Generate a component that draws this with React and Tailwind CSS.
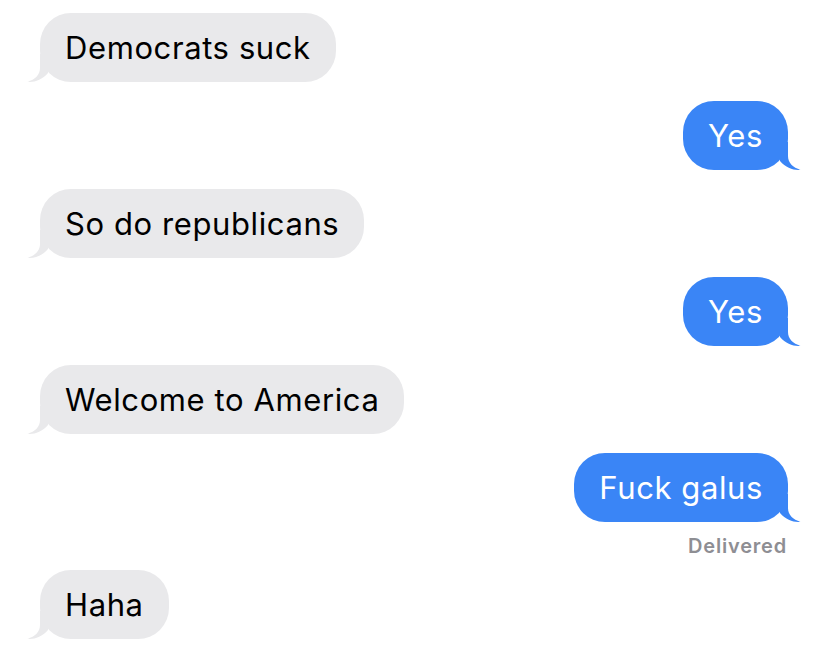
const font = { fontFamily: "Inter, 'Noto Sans', sans-serif" };

const TailLeft = () => (
  <svg
    className="absolute -left-[13px] bottom-0"
    width="24"
    height="28"
    viewBox="0 0 24 28"
  >
    <path
      d="M13 0 L13 14 C13 21 8 25.5 0.5 27.8 C7 28.6 15 26 21 19 L21 0 Z"
      fill="#e9e9eb"
    />
  </svg>
);

const TailRight = () => (
  <svg
    className="absolute -right-[13px] bottom-0 -scale-x-100"
    width="24"
    height="28"
    viewBox="0 0 24 28"
  >
    <path
      d="M13 0 L13 14 C13 21 8 25.5 0.5 27.8 C7 28.6 15 26 21 19 L21 0 Z"
      fill="#3a85f6"
    />
  </svg>
);

const Received = ({ text, className = "" }) => (
  <div className={`flex justify-start ${className}`}>
    <div className="relative h-[69px] flex items-center px-[25px] pt-[2px] rounded-[31px] bg-[#e9e9eb] text-black text-[31px] tracking-[0.6px]">
      <TailLeft />
      <span className="relative">{text}</span>
    </div>
  </div>
);

const Sent = ({ text, className = "" }) => (
  <div className={`flex justify-end ${className}`}>
    <div className="relative h-[69px] flex items-center px-[25px] pt-[2px] rounded-[31px] bg-[#3a85f6] text-white text-[31px] tracking-[0.6px]">
      <TailRight />
      <span className="relative">{text}</span>
    </div>
  </div>
);

export default function App() {
  return (
    <div
      className="w-[828px] h-[657px] bg-white overflow-hidden flex flex-col px-[40px] pt-[13px]"
      style={font}
    >
      <Received text="Democrats suck" />
      <Sent text="Yes" className="mt-[19px]" />
      <Received text="So do republicans" className="mt-[19px]" />
      <Sent text="Yes" className="mt-[19px]" />
      <Received text="Welcome to America" className="mt-[19px]" />
      <Sent text="Fuck galus" className="mt-[19px]" />
      <div className="flex justify-end mt-[13px] pr-[1px]">
        <span className="text-[20px] leading-[22px] font-semibold tracking-[0.8px] text-[#8e8e93]">
          Delivered
        </span>
      </div>
      <Received text="Haha" className="mt-[13px]" />
    </div>
  );
}
